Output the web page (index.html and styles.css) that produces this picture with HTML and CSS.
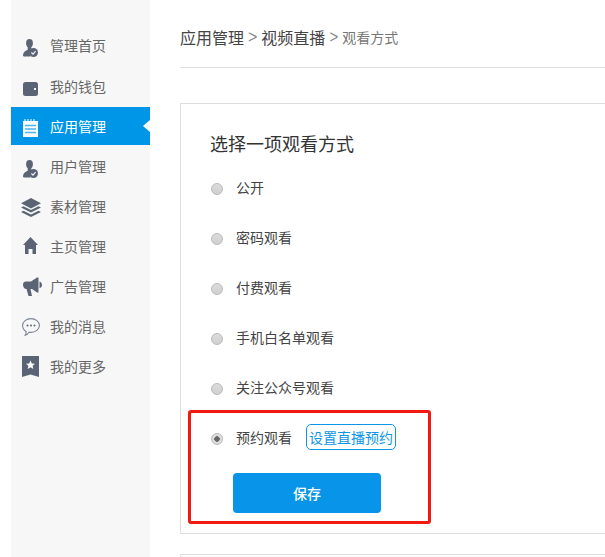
FILE: index.html
```html
<!DOCTYPE html>
<html lang="zh">
<head>
<meta charset="utf-8">
<title>观看方式</title>
<link rel="stylesheet" href="styles.css">
</head>
<body>
<div class="page">
  <aside class="sidebar">
    <a class="nav-item"><span class="slot"><svg class="icon i-user" viewBox="0 0 15 18"><ellipse cx="6.500" cy="4.200" rx="3.400" ry="4.200"/><path d="M4.700 7h3.600v2.700l1.500 1A5 5 0 0 0 7.500 17.500H1c-.8 0-1-.5-1-1.200 0-2.300 1.800-4.300 4.700-5.500z"/><circle cx="10.500" cy="13.500" r="4.500"/><path class="cut" d="M8.400 13.500l1.600 1.700 2.600-3.100"/></svg></span><span>管理首页</span></a>
    <a class="nav-item tall-row"><span class="slot"><svg class="icon i-wallet" viewBox="0 0 15 14"><rect width="15" height="14" rx="2.500"/><rect class="hole" x="11" y="6" width="2" height="2"/></svg></span><span>我的钱包</span></a>
    <a class="nav-item active"><span class="slot"><svg class="icon i-note" viewBox="0 0 15 18"><path class="white" d="M0 2h1.500V0h1v2h2V0h1v2h2V0h1v2h2V0h1v2H15v16H0z"/><path class="line" d="M2 6.500h11M2 10h11M2 13.500h11"/></svg></span><span>应用管理</span><i class="caret"></i></a>
    <a class="nav-item"><span class="slot"><svg class="icon i-user" viewBox="0 0 15 18"><ellipse cx="6.500" cy="4.200" rx="3.400" ry="4.200"/><path d="M4.700 7h3.600v2.700l1.500 1A5 5 0 0 0 7.500 17.500H1c-.8 0-1-.5-1-1.200 0-2.300 1.800-4.300 4.700-5.500z"/><circle cx="10.500" cy="13.500" r="4.500"/><path class="cut" d="M8.400 13.500l1.600 1.700 2.600-3.100"/></svg></span><span>用户管理</span></a>
    <a class="nav-item"><span class="slot"><svg class="icon i-layers" viewBox="0 0 20 19"><path d="M10 0l10 5.200-10 5.200L0 5.200z"/><path d="M2.500 8.200L10 12l7.500-3.800L20 9.500l-10 5-10-5z"/><path d="M2.500 12.700L10 16.500l7.500-3.800L20 14l-10 5-10-5z"/></svg></span><span>素材管理</span></a>
    <a class="nav-item"><span class="slot"><svg class="icon i-home" viewBox="0 0 15 17"><path d="M7.500 0L15 8h-2v9H9.500v-5h-4v5H2V8H0z"/></svg></span><span>主页管理</span></a>
    <a class="nav-item"><span class="slot"><svg class="icon i-horn" viewBox="0 0 19 19"><path d="M0 7.500C0 5.500 1.300 4.500 3 4.500h5L14 .5h1.500v15H14L9 12H7.500L9 19H5.500L3.500 12C1.300 12 0 10 0 7.500z"/><path d="M16.500 4.500c1.500.5 2.500 1.800 2.500 3.500s-1 2.800-2.500 3.300z"/></svg></span><span>广告管理</span></a>
    <a class="nav-item"><span class="slot"><svg class="icon i-msg" viewBox="0 0 18 18"><path d="M9 .6c4.600 0 8.400 3 8.400 6.900S13.600 14.400 9 14.400c-.7 0-1.300 0-2-.2-1 1.500-2.400 2.700-3.800 3.100.6-1 1-2.300.9-3.900C2 12.200.6 10 .6 7.500.6 3.600 4.400.6 9 .6z"/><circle class="dot" cx="5.500" cy="7.500" r="1"/><circle class="dot" cx="9" cy="7.500" r="1"/><circle class="dot" cx="12.500" cy="7.500" r="1"/></svg></span><span>我的消息</span></a>
    <a class="nav-item"><span class="slot"><svg class="icon i-mark" viewBox="0 0 17 21"><path d="M0 0h17v21l-8.500-2.500L0 21z"/><path class="white" d="M8.500 4.500l1.300 2.900 3.200.3-2.400 2.100.7 3.100-2.800-1.600-2.800 1.600.7-3.100L4 7.700l3.200-.3z"/></svg></span><span>我的更多</span></a>
  </aside>
  <main class="content">
    <header class="crumbs">
      <span>应用管理</span><span class="sep">&gt;</span><span>视频直播</span><span class="sep small">&gt;</span><span class="current">观看方式</span>
    </header>
    <section class="card">
      <h2>选择一项观看方式</h2>
      <div class="opt"><i class="radio"></i><label>公开</label></div>
      <div class="opt"><i class="radio"></i><label>密码观看</label></div>
      <div class="opt"><i class="radio"></i><label>付费观看</label></div>
      <div class="opt"><i class="radio"></i><label>手机白名单观看</label></div>
      <div class="opt"><i class="radio"></i><label>关注公众号观看</label></div>
      <div class="opt"><i class="radio on"></i><label>预约观看</label><button class="set">设置直播预约</button></div>
      <button class="save">保存</button>
      <div class="highlight"></div>
    </section>
    <section class="card next"></section>
  </main>
</div>
</body>
</html>
```
FILE: styles.css
```css
html, body { margin: 0; height: 100%; overflow: hidden; background: #fff; }
body { font-family: "Noto Sans CJK SC", "Liberation Sans", sans-serif; color: #444; }
.page { display: flex; height: 557px; width: 605px; overflow: hidden; }

.sidebar { width: 139px; margin-left: 11px; flex: none; background: #f7f7f7; padding-top: 25px; box-sizing: border-box; }
.nav-item { display: flex; align-items: center; height: 40px; position: relative; font-size: 14px; color: #666; }
.nav-item.tall-row { height: 41px; }
.slot { width: 39px; flex: none; display: flex; justify-content: center; align-items: center; }
.icon { display: block; fill: #5b6475; }
.i-user { width: 15px; height: 18px; margin-top: 6px; }
.i-wallet { width: 15px; height: 14px; margin-top: 7px; }
.i-note { width: 15px; height: 18px; margin-top: 4px; }
.i-layers { width: 20px; height: 19px; margin-top: 3px; }
.i-home { width: 15px; height: 17px; margin-top: -1px; }
.i-horn { width: 19px; height: 19px; margin-left: 4px; margin-top: 1px; }
.i-msg { width: 18px; height: 18px; margin-top: 2px; fill: none; stroke: #7b8494; stroke-width: 1.1; }
.i-msg .dot { fill: #5b6475; stroke: none; }
.i-mark { width: 17px; height: 21px; margin-top: 1px; }
.icon .cut { fill: none; stroke: #f7f7f7; stroke-width: 1.1; }
.icon .hole { fill: #f7f7f7; }
.icon .white { fill: #fff; }
.icon .line { stroke: #4db4ee; stroke-width: 1.5; fill: none; }
.nav-item.active { background: #0096e8; color: #fff; height: 38px; margin: 1px 0; }
.caret { position: absolute; right: 0; top: 13px; width: 0; height: 0; border: 6px solid transparent; border-left: 0; border-right: 7px solid #fff; }

.content { flex: none; width: 455px; padding-left: 30px; box-sizing: border-box; margin-right: -30px; }
.crumbs { height: 68px; box-sizing: border-box; border-bottom: 1px solid #ddd; display: flex; align-items: center; font-size: 16px; color: #444; padding-top: 6px; width: 440px; }
.sep { color: #888; margin: 0 4px; font-family: "Liberation Sans", sans-serif; transform: scaleY(1.2); }
.sep.small { margin: 0 4px; font-size: 15px; }
.current { font-size: 14px; color: #777; }

.card { position: relative; margin-top: 35px; height: 431px; width: 440px; box-sizing: border-box; border: 1px solid #ddd; border-right: 0; padding: 25px 0 0 29px; }
.card h2 { margin: 0 0 5px; font-size: 18px; font-weight: 400; line-height: 28px; color: #333; }
.opt { display: flex; align-items: center; height: 50px; font-size: 14px; color: #444; }
.radio { box-sizing: border-box; width: 12px; height: 12px; border-radius: 50%; background: linear-gradient(#dcdcdc, #cfcfcf); border: 1px solid #bbb; flex: none; margin: 3px 13px 0 1px; }
.radio.on { background: radial-gradient(circle, #666 0 2.500px, #ddd 3px); }
.set { margin-left: 14px; width: 90px; height: 26px; padding: 0; border: 1px solid #0d96e6; border-radius: 5px; background: #fff; color: #0d96e6; font: inherit; font-size: 14px; white-space: nowrap; }
.save { display: block; margin: 11px 0 0 23px; width: 148px; height: 40px; border: 0; border-radius: 4px; background: #0894e8; color: #fff; font: inherit; font-size: 14px; font-weight: 500; }
.highlight { position: absolute; left: 7px; top: 306px; width: 237px; height: 108px; border: 3px solid #f01a10; border-radius: 3px; }
.next { margin-top: 20px; }
```
